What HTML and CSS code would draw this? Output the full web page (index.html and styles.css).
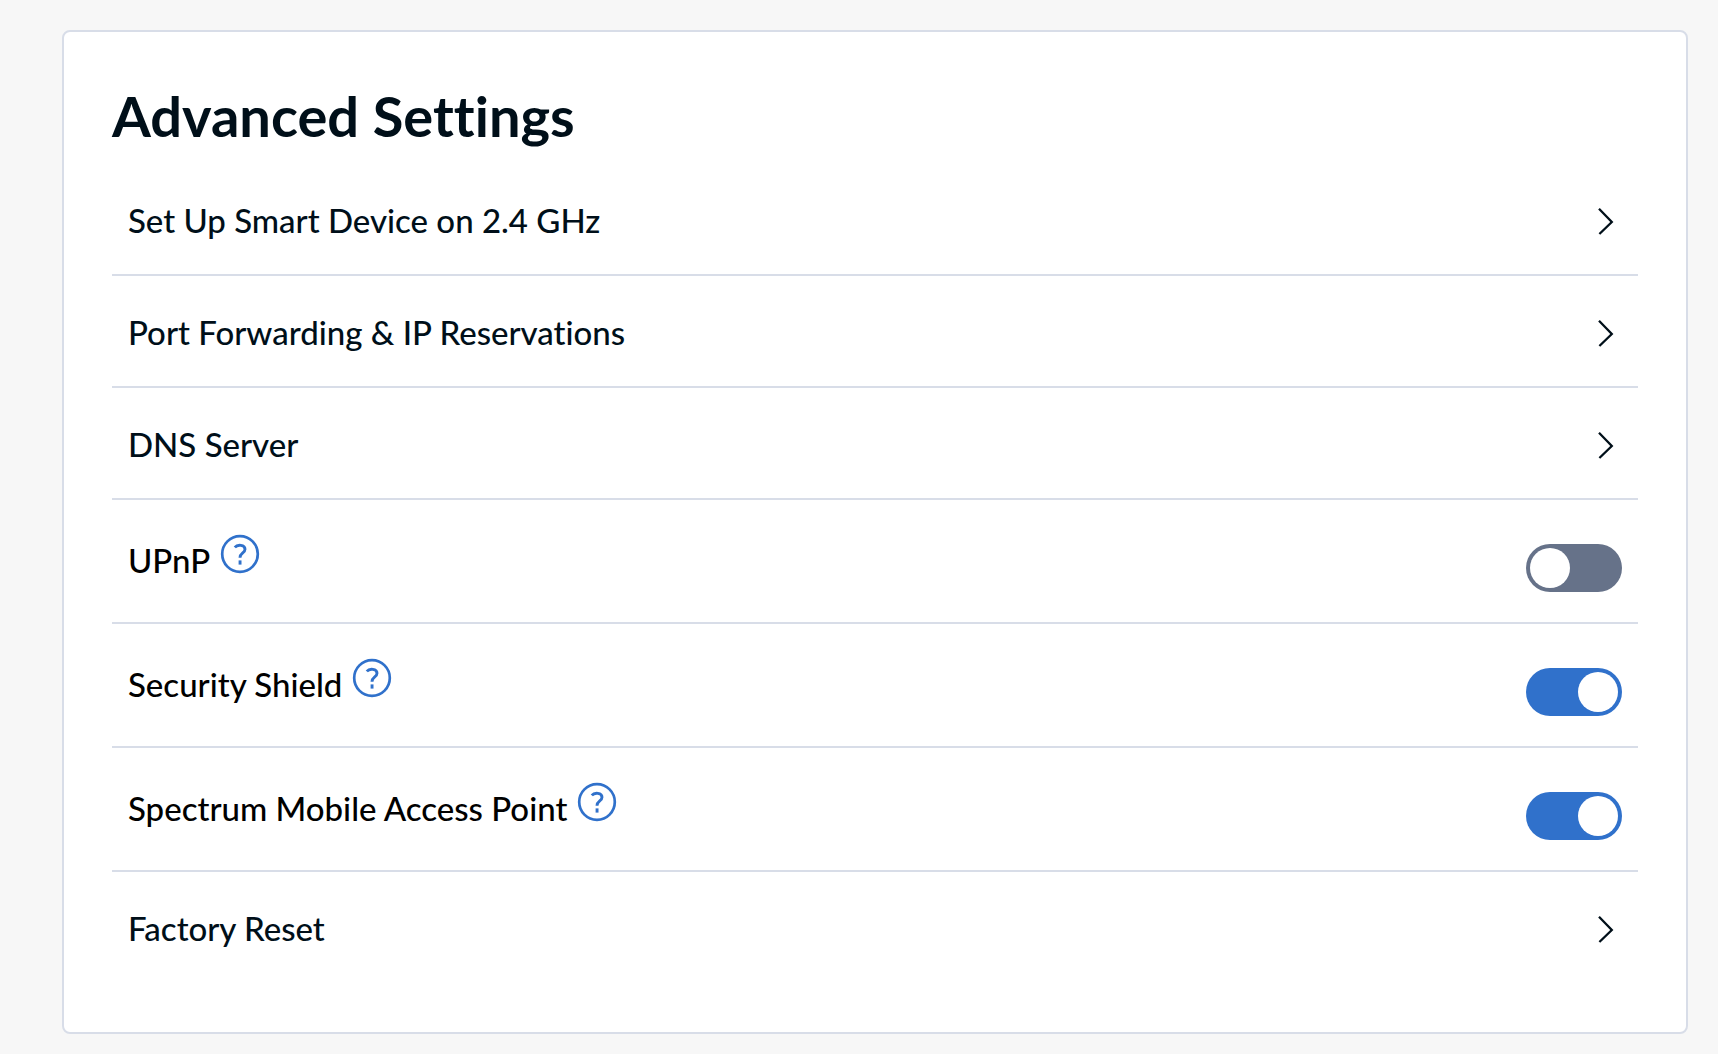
FILE: index.html
```html
<!DOCTYPE html>
<html lang="en">
<head>
    <meta charset="UTF-8">
    <meta name="viewport" content="width=device-width, initial-scale=1.0">
    <title>Advanced Settings</title>
    <link rel="stylesheet" href="styles.css">
</head>
<body>
    <svg class="sprite" aria-hidden="true">
        <symbol id="icon-chevron" viewBox="0 0 32 32">
            <path d="M9 2.8 L21.8 16 L9.4 28" fill="none" stroke="currentColor" stroke-width="2.3"/>
        </symbol>
        <symbol id="icon-help" viewBox="0 0 40 40">
            <circle cx="20" cy="20" r="17.8" fill="none" stroke="currentColor" stroke-width="2.7"/>
            <path d="M14.8 13.4 C17.5 10.2 25 10.6 25 15.2 C25 19.2 20 18.6 20 23.8" fill="none" stroke="currentColor" stroke-width="2.9"/>
            <rect x="18.6" y="26.4" width="2.9" height="4.2" fill="currentColor"/>
        </symbol>
    </svg>

    <main class="card">
        <h1>Advanced Settings</h1>
        <ul class="settings">
            <li>
                <a class="row" href="#smart-device">Set Up Smart Device on 2.4 GHz
                    <svg class="chevron" aria-hidden="true"><use href="#icon-chevron"/></svg></a>
            </li>
            <li>
                <a class="row" href="#port-forwarding">Port Forwarding &amp; IP Reservations
                    <svg class="chevron" aria-hidden="true"><use href="#icon-chevron"/></svg></a>
            </li>
            <li>
                <a class="row" href="#dns">DNS Server
                    <svg class="chevron" aria-hidden="true"><use href="#icon-chevron"/></svg></a>
            </li>
            <li class="row toggle-row">
                <label for="upnp">UPnP</label>
                <button class="help" type="button" aria-label="About UPnP"><svg><use href="#icon-help"/></svg></button>
                <input class="toggle" type="checkbox" role="switch" id="upnp">
            </li>
            <li class="row toggle-row">
                <label for="shield">Security Shield</label>
                <button class="help" type="button" aria-label="About Security Shield"><svg><use href="#icon-help"/></svg></button>
                <input class="toggle" type="checkbox" role="switch" id="shield" checked>
            </li>
            <li class="row toggle-row">
                <label for="access-point">Spectrum Mobile Access Point</label>
                <button class="help" type="button" aria-label="About Spectrum Mobile Access Point"><svg><use href="#icon-help"/></svg></button>
                <input class="toggle" type="checkbox" role="switch" id="access-point" checked>
            </li>
            <li>
                <a class="row" href="#factory-reset">Factory Reset
                    <svg class="chevron" aria-hidden="true"><use href="#icon-chevron"/></svg></a>
            </li>
        </ul>
    </main>
</body>
</html>
```
FILE: styles.css
```css
* {
    box-sizing: border-box;
}
body {
    margin: 0;
    padding: 30px 30px 20px 62px;
    background-color: #f7f7f7;
    color: #000f19;
    font-family: Lato, "Open Sans", sans-serif;
    font-size: 33px;
    font-weight: 500;
    font-variant-ligatures: none;
    line-height: 40px;
}
.sprite {
    position: absolute;
    width: 0;
    height: 0;
}
.card {
    background-color: white;
    border: 2px solid #d8dde8;
    border-radius: 8px;
    padding: 48px;
}
h1 {
    margin: 0;
    padding-bottom: 12px;
    font-size: 56px;
    font-weight: 700;
    line-height: 72px;
}
.settings {
    list-style: none;
    margin: 0;
    padding: 0;
}
.settings li {
    border-bottom: 2px solid #d8dde8;
}
.settings li:last-child {
    border-bottom-color: transparent;
}
.row {
    display: flex;
    align-items: flex-start;
    padding: 36px 16px 34px;
    color: inherit;
    text-decoration: none;
}
.chevron {
    width: 32px;
    height: 32px;
    margin-top: 6px;
    margin-left: auto;
}
.toggle-row {
    color: black;
    padding: 30px 16px;
}
.toggle-row label {
    margin-top: 10px;
}
.help {
    margin: 4px 0 0 10px;
    padding: 0;
    border: none;
    background: none;
    color: #3071cb;
    cursor: pointer;
}
.help svg {
    display: block;
    width: 40px;
    height: 40px;
}
.toggle {
    appearance: none;
    width: 96px;
    height: 48px;
    margin: 14px 0 0 auto;
    padding: 4px;
    border-radius: 24px;
    background-color: #667289;
    cursor: pointer;
}
.toggle::before {
    content: "";
    display: block;
    width: 40px;
    height: 40px;
    border-radius: 50%;
    background-color: white;
}
.toggle:checked {
    background-color: #3071cb;
}
.toggle:checked::before {
    margin-left: auto;
}
```
